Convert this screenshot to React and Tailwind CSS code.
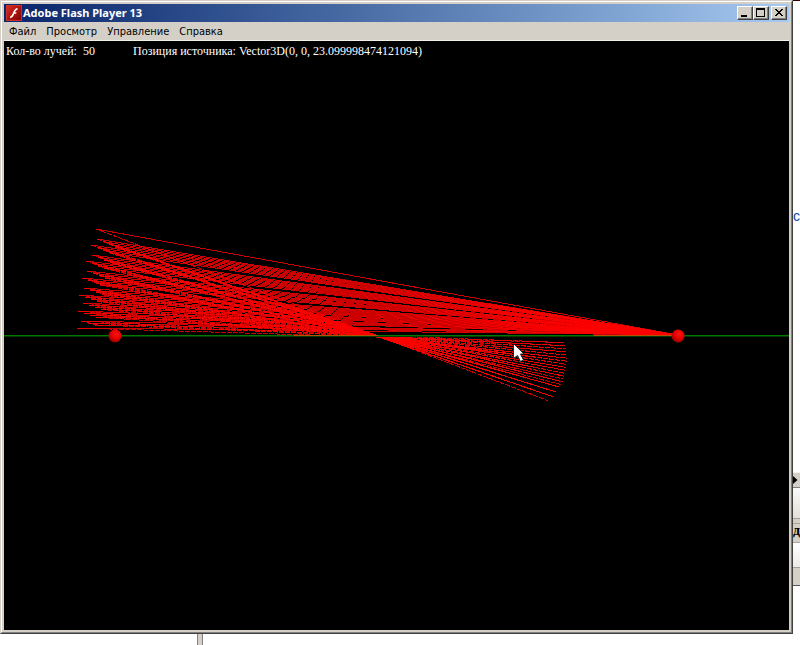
const MENU = ['Файл', 'Просмотр', 'Управление', 'Справка'];

const SOURCE = { x: 674, y: 294 };
const FOCUS = { x: 375, y: 295.5 };

// outermost hit points on the mirror, top to bottom
const HITS = [
  [92, 188], [93, 198], [87, 204], [88, 214], [82, 220], [83, 230], [78, 237],
  [80, 247], [75, 254], [79, 262], [74, 270], [77, 280], [73, 287],
];

// rays leave the focus in evenly spread directions
const SPREAD = 0.0165;

function buildRays() {
  const rays = [];
  HITS.forEach(([x, y], row) => {
    const copies = row === 0 || row === HITS.length - 1 ? 1 : row === 11 ? 3 : 4;
    const drop = 1.9 + ((288 - y) / 100) * 0.8;
    for (let k = 0; k < copies; k++) {
      const hx = x + k * 6;
      const hy = y + k * drop;
      const slope = (FOCUS.y - hy) / (FOCUS.x - hx);
      const out = Math.round(slope / SPREAD) * SPREAD;
      const u = out / 0.38;
      const ex = 558 + 28 * u - 42 * u * u - (k % 2) * 2;
      rays.push({ hx, hy, ex, ey: FOCUS.y + out * (ex - FOCUS.x) });
    }
  });
  return rays;
}

const RAYS = buildRays();

function FlashIcon() {
  return (
    <svg width="16" height="16" viewBox="0 0 16 16" className="shrink-0" aria-hidden="true">
      <defs>
        <linearGradient id="flash" x1="0" y1="0" x2="1" y2="1">
          <stop offset="0" stopColor="#e02a20" />
          <stop offset="1" stopColor="#7d0000" />
        </linearGradient>
      </defs>
      <rect x="0.5" y="0.5" width="15" height="15" fill="url(#flash)" stroke="#c4342b" />
      <path d="M11.5 3.8C8.8 3.8 8.2 7 7.2 9.3 6.5 11.2 5.7 12.2 4.2 12.3M7.5 8H10.3" fill="none" stroke="#fff" strokeWidth="1.7" />
    </svg>
  );
}

function CaptionButton({ label, children }) {
  return (
    <button
      type="button"
      aria-label={label}
      className="h-[14px] w-4 border border-t-white border-l-white border-r-[#404040] border-b-[#404040] bg-[#d4d0c8] shadow-[inset_-1px_-1px_0_#808080]"
    >
      <svg width="14" height="12" viewBox="0 0 14 12" shapeRendering="crispEdges" className="block">
        {children}
      </svg>
    </button>
  );
}

function TitleBar() {
  return (
    <header className="flex h-[18px] items-center bg-linear-to-r from-[#0a246a] to-[#a6caf0] px-[2px]">
      <FlashIcon />
      <h1 className="ml-px flex-1 font-['Noto_Sans',sans-serif] text-[11px] leading-[18px] font-bold text-white">
        Adobe Flash Player 13
      </h1>
      <CaptionButton label="Свернуть">
        <rect x="3" y="8" width="6" height="2" />
      </CaptionButton>
      <CaptionButton label="Развернуть">
        <path d="M2 1H11V10H2ZM3 3V9H10V3Z" fillRule="evenodd" />
      </CaptionButton>
      <span className="w-[2px]" />
      <CaptionButton label="Закрыть">
        <path d="M3 2H5V3H6V4H8V3H9V2H11V3H10V4H9V5H8V6H9V7H10V8H11V9H9V8H8V7H6V8H5V9H3V8H4V7H5V6H6V5H5V4H4V3H3Z" />
      </CaptionButton>
    </header>
  );
}

function MenuBar() {
  return (
    <nav className="flex h-[19px] gap-[10px] border-b border-[#f1efe6] pl-[5px] font-['DejaVu_Sans_Condensed','Liberation_Sans',sans-serif] text-[11px] leading-5 text-black">
      {MENU.map((item) => (
        <button key={item} type="button">{item}</button>
      ))}
    </nav>
  );
}

function Scene() {
  return (
    <svg viewBox="0 0 785 589" className="block w-full">
      <defs>
        <radialGradient id="ball" cx="0.6" cy="0.35" r="0.7">
          <stop offset="0" stopColor="#ff1010" />
          <stop offset="0.5" stopColor="#e80000" />
          <stop offset="1" stopColor="#900000" />
        </radialGradient>
      </defs>
      <g fill="none" stroke="#ff0000" strokeOpacity="0.8" shapeRendering="crispEdges">
        {RAYS.map((r) => (
          <g key={`${r.hx}-${r.hy}`}>
            <line x1={SOURCE.x} y1={SOURCE.y} x2={r.hx} y2={r.hy} />
            <line x1={r.hx} y1={r.hy} x2={r.ex} y2={r.ey} strokeDasharray="5 1" />
          </g>
        ))}
      </g>
      <rect y="294" width="785" height="1" fill="#007800" />
      <rect y="295" width="785" height="1" fill="#003c00" />
      <path d="M290 294.5H374M590 294.5H668" stroke="#b85000" fill="none" />
      <circle cx="111" cy="295" r="6.5" fill="url(#ball)" />
      <circle cx="674" cy="295" r="6.5" fill="url(#ball)" />
      {/* mouse pointer */}
      <path
        d="M509.5 302.5V317.5L513.5 314.5L516.5 320.5L519.5 319L516.5 313H520Z"
        fill="#fff"
        stroke="#222"
      />
    </svg>
  );
}

function PlayerWindow() {
  return (
    <main className="min-w-0 flex-1 border border-t-[#d4d0c8] border-l-[#d4d0c8] border-r-[#404040] border-b-[#404040]">
      <div className="border border-t-white border-l-white border-r-[#808080] border-b-[#808080] bg-[#d4d0c8] p-[2px]">
        <TitleBar />
        <MenuBar />
        <section className="relative bg-black">
          <Scene />
          <div className="absolute top-0 left-[2px] flex font-['Liberation_Serif',serif] text-[12px] leading-5 whitespace-pre text-white">
            <p className="w-[127px]">Кол-во лучей:  50</p>
            <p>Позиция источника: Vector3D(0, 0, 23.099998474121094)</p>
          </div>
        </section>
      </div>
    </main>
  );
}

// edge of the window that lies behind the player
function BackgroundEdge() {
  return (
    <aside className="flex w-[7px] flex-col overflow-hidden">
      <div className="h-px bg-[#300000]" />
      <div className="h-[209px]" />
      <p className="h-[262px] font-['Liberation_Sans',sans-serif] text-[14px] leading-3 text-[#0645ad]">с</p>
      <div className="flex h-4 items-center border-y border-t-[#f4f2ec] border-b-[#808080] bg-[#d4d0c8]">
        <svg width="5" height="8" viewBox="0 0 5 8"><path d="M0 0L4.5 4L0 8Z" /></svg>
      </div>
      <div className="h-[31px] border-b border-[#a0a0a0] bg-linear-to-b from-[#fafafa] to-[#e2dfd8]" />
      <div className="h-1 bg-[#d4d0c8]" />
      <p className="h-5 border-y border-[#aaa69c] bg-[#d4d0c8] font-['Liberation_Serif',serif] text-[14px] leading-[14px] font-bold text-black">д</p>
      <div className="h-[25px] border-b border-[#a0a0a0] bg-linear-to-b from-white to-[#ecebe7]" />
      <div className="h-[18px] border-b border-[#555] bg-[#d4d0c8]" />
    </aside>
  );
}

export default function App() {
  return (
    <div className="min-h-screen bg-white">
      <div className="flex">
        <PlayerWindow />
        <BackgroundEdge />
      </div>
      <div className="flex h-[11px] pl-[197px]">
        <div className="w-[6px] border-x border-[#808080] bg-[#d4d0c8]" />
      </div>
    </div>
  );
}
